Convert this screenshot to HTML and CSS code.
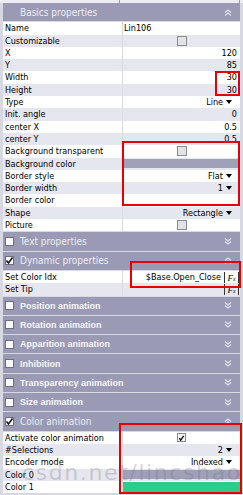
FILE: index.html
```html
<!DOCTYPE html>
<html>
  <head>
    <meta charset="utf-8" />
    <title>Properties</title>
    <link rel="stylesheet" href="styles.css">
  </head>
  <body>
    <div class="panel">
      <div class="top"><span></span><span></span></div>
      <div class="list">

        <div class="head">
          <span class="title">Basics properties</span>
          <svg class="chev" width="8" height="7" viewBox="0 0 8 7"><path d="M1 3.5L4 1L7 3.5M1 6.5L4 4L7 6.5" /></svg>
        </div>
        <div class="rows">
          <div class="row"><span class="lbl">Name</span><span class="val start">Lin106</span></div>
          <div class="row alt"><span class="lbl">Customizable</span><span class="val mid"><i class="box"></i></span></div>
          <div class="row"><span class="lbl">X</span><span class="val">120</span></div>
          <div class="row alt"><span class="lbl">Y</span><span class="val">85</span></div>
          <div class="row"><span class="lbl">Width</span><span class="val">30</span></div>
          <div class="row alt"><span class="lbl">Height</span><span class="val">30</span></div>
          <div class="row"><span class="lbl">Type</span><span class="val drop">Line<i class="tri"></i></span></div>
          <div class="row alt"><span class="lbl">Init. angle</span><span class="val">0</span></div>
          <div class="row"><span class="lbl">center X</span><span class="val">0.5</span></div>
          <div class="row alt"><span class="lbl">center Y</span><span class="val">0.5</span></div>
          <div class="row"><span class="lbl">Background transparent</span><span class="val mid"><i class="box"></i></span></div>
          <div class="row alt"><span class="lbl">Background color</span><span class="val fill"><i class="swatch grey"></i></span></div>
          <div class="row"><span class="lbl">Border style</span><span class="val drop">Flat<i class="tri"></i></span></div>
          <div class="row alt"><span class="lbl">Border width</span><span class="val drop">1<i class="tri"></i></span></div>
          <div class="row"><span class="lbl">Border color</span><span class="val fill"><i class="swatch white"></i></span></div>
          <div class="row alt"><span class="lbl">Shape</span><span class="val drop">Rectangle<i class="tri"></i></span></div>
          <div class="row"><span class="lbl">Picture</span><span class="val mid"><i class="box"></i></span></div>
        </div>

        <div class="head">
          <i class="hbox"></i><span class="title">Text properties</span>
          <svg class="chev" width="8" height="7" viewBox="0 0 8 7"><path d="M1 0.5L4 3L7 0.5M1 3.5L4 6L7 3.5" /></svg>
        </div>

        <div class="head">
          <i class="hbox"><svg width="9" height="9" viewBox="0 0 9 9"><path d="M1.5 4.5L3.5 7L7.5 1.5" /></svg></i><span class="title">Dynamic properties</span>
          <svg class="chev" width="8" height="7" viewBox="0 0 8 7"><path d="M1 3.5L4 1L7 3.5M1 6.5L4 4L7 6.5" /></svg>
        </div>
        <div class="rows">
          <div class="row"><span class="lbl">Set Color Idx</span><span class="val fxv">$Base.Open_Close<i class="fx">F<small>x</small></i></span></div>
          <div class="row alt"><span class="lbl">Set Tip</span><span class="val fxv"><i class="fx">F<small>x</small></i></span></div>
        </div>

        <div class="head bold">
          <i class="hbox"></i><span class="title">Position animation</span>
          <svg class="chev" width="8" height="7" viewBox="0 0 8 7"><path d="M1 0.5L4 3L7 0.5M1 3.5L4 6L7 3.5" /></svg>
        </div>
        <div class="head bold">
          <i class="hbox"></i><span class="title">Rotation animation</span>
          <svg class="chev" width="8" height="7" viewBox="0 0 8 7"><path d="M1 0.5L4 3L7 0.5M1 3.5L4 6L7 3.5" /></svg>
        </div>
        <div class="head bold">
          <i class="hbox"></i><span class="title">Apparition animation</span>
          <svg class="chev" width="8" height="7" viewBox="0 0 8 7"><path d="M1 0.5L4 3L7 0.5M1 3.5L4 6L7 3.5" /></svg>
        </div>
        <div class="head bold">
          <i class="hbox"></i><span class="title">Inhibition</span>
          <svg class="chev" width="8" height="7" viewBox="0 0 8 7"><path d="M1 0.5L4 3L7 0.5M1 3.5L4 6L7 3.5" /></svg>
        </div>
        <div class="head bold">
          <i class="hbox"></i><span class="title">Transparency animation</span>
          <svg class="chev" width="8" height="7" viewBox="0 0 8 7"><path d="M1 0.5L4 3L7 0.5M1 3.5L4 6L7 3.5" /></svg>
        </div>
        <div class="head bold">
          <i class="hbox"></i><span class="title">Size animation</span>
          <svg class="chev" width="8" height="7" viewBox="0 0 8 7"><path d="M1 0.5L4 3L7 0.5M1 3.5L4 6L7 3.5" /></svg>
        </div>

        <div class="head">
          <i class="hbox"><svg width="9" height="9" viewBox="0 0 9 9"><path d="M1.5 4.5L3.5 7L7.5 1.5" /></svg></i><span class="title">Color animation</span>
          <svg class="chev" width="8" height="7" viewBox="0 0 8 7"><path d="M1 3.5L4 1L7 3.5M1 6.5L4 4L7 6.5" /></svg>
        </div>
        <div class="rows">
          <div class="row"><span class="lbl">Activate color animation</span><span class="val mid"><i class="box on"><svg width="8" height="8" viewBox="0 0 8 8"><path d="M1.5 4L3 6.5L6.5 1.5" /></svg></i></span></div>
          <div class="row alt"><span class="lbl">#Selections</span><span class="val drop">2<i class="tri"></i></span></div>
          <div class="row"><span class="lbl">Encoder mode</span><span class="val drop">Indexed<i class="tri"></i></span></div>
          <div class="row alt"><span class="lbl">Color 0</span><span class="val fill"><i class="swatch grey"></i></span></div>
          <div class="row"><span class="lbl">Color 1</span><span class="val fill"><i class="swatch green"></i></span></div>
        </div>
      </div>

      <div class="wmark">csdn.net/lincshao</div>

      <div class="mark m1"></div>
      <div class="mark m2"></div>
      <div class="mark m3"></div>
      <div class="mark m4"></div>
    </div>
  </body>
</html>
```

FILE: styles.css
```css
  body {
    margin: 0;
    background: #d8d8e0;
    font-family: "DejaVu Sans", sans-serif;
    font-stretch: condensed;
  }
  .panel {
    position: relative;
    width: 243px;
    height: 495px;
    overflow: hidden;
    background: #d8d8e2;
  }
  .top {
    height: 3px;
    display: grid;
    grid-template-columns: 120px 120px;
    background: #ececf2;
  }
  .top span {
    border-right: 1px solid #9a9aa8;
  }
  .list {
    padding: 0 3px;
  }

  /* section headers */
  .head {
    height: 18.3px;
    margin-bottom: 1px;
    background: #9a9ab4;
    display: flex;
    align-items: center;
    color: #ececf3;
    font-size: 10px;
  }
  .head .title {
    margin-left: 17px;
  }
  .head .hbox + .title {
    margin-left: 6px;
  }
  .head.bold {
    font-family: "Liberation Sans", sans-serif;
    font-weight: bold;
    font-size: 9px;
    color: #f6f6fa;
  }
  .hbox {
    width: 9px;
    height: 9px;
    margin-left: 2px;
    box-sizing: border-box;
    border: 1px solid #6e6e80;
    background: #fafafc;
    display: flex;
  }
  .hbox svg {
    margin: -1px;
  }
  .hbox path {
    fill: none;
    stroke: #111;
    stroke-width: 1.5;
  }
  .chev {
    margin-left: auto;
    margin-right: 8px;
  }
  .chev path {
    fill: none;
    stroke: #e2e2ec;
    stroke-width: 1.1;
  }

  /* property rows */
  .rows {
    margin-bottom: 1px;
  }
  .row {
    display: grid;
    grid-template-columns: 119px 1fr;
    height: 12.3px;
    line-height: 12.3px;
    font-size: 9px;
    color: #000;
    background: #fff;
  }
  .row.alt {
    background: #e6e6ee;
  }
  .lbl {
    padding-left: 2px;
    white-space: nowrap;
  }
  .val {
    display: flex;
    align-items: center;
    justify-content: flex-end;
    padding-right: 3px;
    border-left: 1px solid #dadae2;
    white-space: nowrap;
  }
  .val.start {
    justify-content: flex-start;
    padding-left: 1px;
  }
  .val.mid {
    justify-content: center;
    padding-right: 0;
  }
  .val.fill {
    padding: 1.5px 0;
    align-items: stretch;
  }
  .val.drop {
    padding-right: 8px;
  }
  .val.fxv {
    padding-right: 1px;
  }
  .tri {
    width: 0;
    height: 0;
    margin-left: 3px;
    border-left: 3.5px solid transparent;
    border-right: 3.5px solid transparent;
    border-top: 4px solid #000;
  }
  .box {
    width: 10px;
    height: 10px;
    box-sizing: border-box;
    border: 1px solid #8a8a92;
    background: #e2e2e6;
    display: flex;
  }
  .box.on {
    width: 9px;
    height: 9px;
    background: #f4f4f6;
  }
  .box path {
    fill: none;
    stroke: #111;
    stroke-width: 1.5;
  }
  .swatch {
    flex: 1;
  }
  .swatch.grey {
    background: #a0a0b8;
  }
  .swatch.white {
    background: #fff;
  }
  .swatch.green {
    background: #2ecb8f;
  }
  .fx {
    display: flex;
    align-items: flex-end;
    justify-content: center;
    height: 11px;
    width: 13px;
    margin-left: 3px;
    border-left: 1px solid #333;
    border-right: 1px solid #333;
    font-family: "Liberation Serif", serif;
    font-size: 9px;
    line-height: 10px;
  }
  .fx small {
    font-size: 5.5px;
    line-height: 7px;
  }

  /* watermark and red annotation frames */
  .wmark {
    position: absolute;
    left: 22px;
    top: 460px;
    font-family: "DejaVu Sans", sans-serif;
    font-stretch: normal;
    font-size: 22px;
    letter-spacing: 1.6px;
    color: rgba(110, 110, 125, 0.28);
    white-space: nowrap;
  }
  .mark {
    position: absolute;
    box-sizing: border-box;
    border: 2px solid #e60000;
  }
  .m1 {
    left: 215px;
    top: 71px;
    width: 25px;
    height: 25px;
  }
  .m2 {
    left: 122px;
    top: 141px;
    width: 118px;
    height: 65px;
  }
  .m3 {
    left: 130px;
    top: 261px;
    width: 111px;
    height: 27px;
  }
  .m4 {
    left: 119px;
    top: 423px;
    width: 123px;
    height: 71px;
  }
```
